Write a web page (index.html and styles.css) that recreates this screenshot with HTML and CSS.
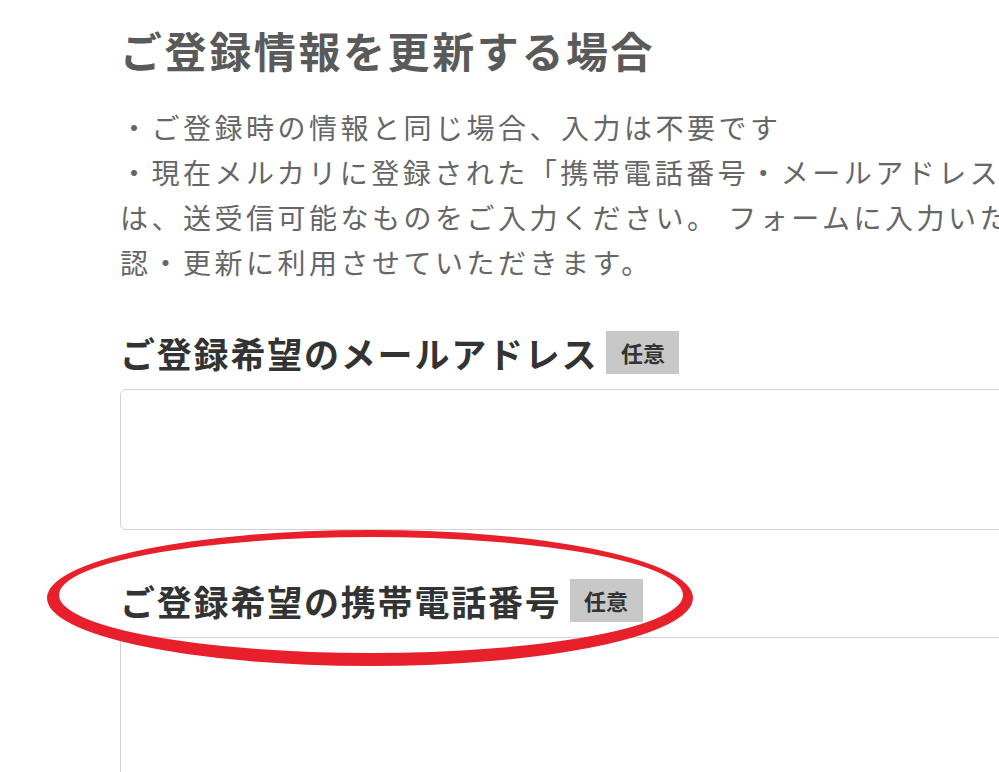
FILE: index.html
```html
<!DOCTYPE html>
<html lang="ja">
  <head>
    <meta charset="utf-8" />
    <meta name="viewport" content="width=device-width,initial-scale=1" />
    <title>ご登録情報の更新</title>
    <link rel="stylesheet" href="styles.css">
  </head>
  <body>
    <div class="page">
      <h1 class="title">ご登録情報を更新する場合</h1>
      <div class="notes">
        <div class="note-line">・ご登録時の情報と同じ場合、入力は不要です</div>
        <div class="note-line">・現在メルカリに登録された「携帯電話番号・メールアドレス」と異なる場合</div>
        <div class="note-line">は、送受信可能なものをご入力ください。 フォームに入力いただいた情報は、ご本人様確</div>
        <div class="note-line">認・更新に利用させていただきます。</div>
      </div>

      <div class="field">
        <label class="field-label">ご登録希望のメールアドレス <span class="badge">任意</span></label>
        <div class="field-input"></div>
      </div>

      <div class="field field-phone">
        <label class="field-label">ご登録希望の携帯電話番号 <span class="badge">任意</span></label>
        <div class="field-input"></div>
      </div>

      <!-- 赤丸の囲み -->
      <svg class="mark" width="999" height="772" viewBox="0 0 999 772">
        <path fill="#e8202b" fill-rule="evenodd"
          d="M47 598 A323 68 0 1 0 693 598 A323 68 0 1 0 47 598 Z
             M59 595 A312 58 0 1 0 683 595 A312 58 0 1 0 59 595 Z" />
      </svg>
    </div>
  </body>
</html>
```

FILE: styles.css
```css
html,
body {
  margin: 0;
  height: 100%;
  overflow: hidden;
  background: #fff;
}

.page {
  position: relative;
  padding: 20px 0 0 120px;
  font-family: "Noto Sans CJK JP", "Noto Sans", sans-serif;
}

.title {
  margin: 0;
  font-size: 42px;
  line-height: 60px;
  font-weight: 700;
  letter-spacing: 2.6px;
  color: #5a5a5a;
  white-space: nowrap;
}

.notes {
  margin-top: 25px;
  font-size: 28px;
  line-height: 45px;
  letter-spacing: 3.5px;
  color: #666;
}

.note-line {
  white-space: nowrap;
}

.field {
  margin-top: 42px;
}

.field-phone {
  margin-top: 45px;
}

.field-label {
  display: flex;
  align-items: center;
  height: 50px;
  font-size: 35px;
  font-weight: 700;
  letter-spacing: 1.8px;
  color: #333;
  white-space: nowrap;
}

.badge {
  display: inline-flex;
  align-items: center;
  justify-content: center;
  margin-left: 8px;
  width: 73px;
  height: 43px;
  background: #c8c8c8;
  font-size: 22px;
  letter-spacing: 0;
  color: #333;
}

.field-input {
  margin-top: 12px;
  width: 1000px;
  height: 139px;
  border: 1px solid #d2d2d2;
  border-radius: 6px;
  background: #fff;
}

.mark {
  position: absolute;
  top: 0;
  left: 0;
  pointer-events: none;
}
```
